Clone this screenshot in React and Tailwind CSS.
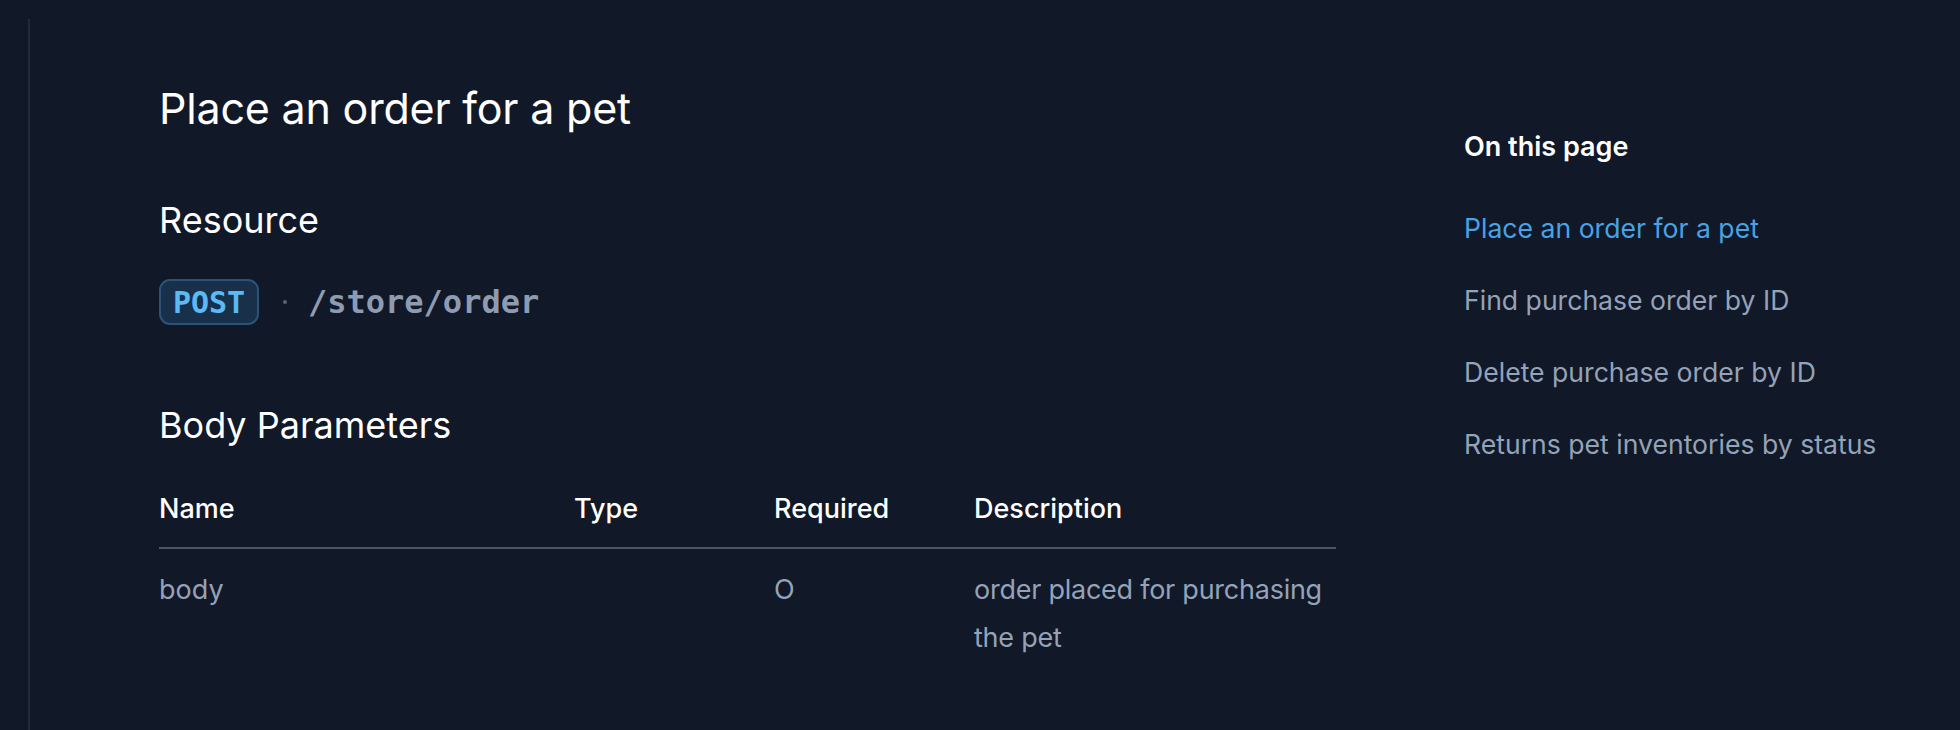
import React from "react";

const tocLinks = [
  { label: "Place an order for a pet", active: true },
  { label: "Find purchase order by ID" },
  { label: "Delete purchase order by ID" },
  { label: "Returns pet inventories by status" },
];

const columns = ["Name", "Type", "Required", "Description"];

const rows = [
  {
    name: "body",
    type: "",
    required: "O",
    description: "order placed for purchasing the pet",
  },
];

const App = () => {
  return (
    <div className="flex min-h-[730px] w-full bg-[#111827] font-['Inter',sans-serif] text-white">
      <div className="w-[28px] shrink-0" />
      <div className="mt-[19px] flex flex-1 border-l-2 border-[#222a39]">
        {/* main column */}
        <div className="w-[1305px] shrink-0 pl-[129px]">
          <h1 className="mt-[64px] text-[43px] leading-[50px] tracking-[-0.2px] text-white">
            Place an order for a pet
          </h1>

          <h2 className="mt-[66px] text-[36px] leading-[43px] text-white">
            Resource
          </h2>

          <div className="mt-[36px] flex items-center">
            <span className="flex h-[46px] w-[100px] items-center justify-center rounded-[11px] border-2 border-[#2b5378] bg-[#19304b] font-['DejaVu_Sans_Mono',monospace] text-[30px] font-bold text-[#5bb9f4]">
              POST
            </span>
            <span className="ml-[24px] h-[4px] w-[4px] rounded-full bg-[#5b6473]" />
            <span className="ml-[21px] font-['DejaVu_Sans_Mono',monospace] text-[32px] font-bold text-[#8f9bb0]">
              /store/order
            </span>
          </div>

          <h2 className="mt-[78px] text-[36px] leading-[43px] text-white">
            Body Parameters
          </h2>

          <div className="mt-[42px] w-[1177px]">
            <div className="grid grid-cols-[415px_200px_200px_1fr] border-b-2 border-[#4b5563] pb-[18px]">
              {columns.map((col) => (
                <div key={col} className="text-[27px] font-medium leading-[40px] text-white">
                  {col}
                </div>
              ))}
            </div>
            {rows.map((row, i) => (
              <div
                key={i}
                className="grid grid-cols-[415px_200px_200px_1fr] pt-[17px] text-[27px] leading-[48px] text-[#94a3b8]"
              >
                <div>{row.name}</div>
                <div>{row.type}</div>
                <div>{row.required}</div>
                <div className="tracking-[-0.25px]">{row.description}</div>
              </div>
            ))}
          </div>
        </div>

        {/* on this page */}
        <div className="pl-[129px] pt-[110px]">
          <div className="text-[27px] font-semibold leading-[36px] text-white">
            On this page
          </div>
          <ul className="mt-[44px] flex flex-col gap-[34px]">
            {tocLinks.map((link) => (
              <li
                key={link.label}
                className={
                  link.active
                    ? "text-[26.6px] leading-[38px] text-[#47a3e5]"
                    : "text-[26.6px] leading-[38px] text-[#94a3b8]"
                }
              >
                {link.label}
              </li>
            ))}
          </ul>
        </div>
      </div>
    </div>
  );
};

export default App;
